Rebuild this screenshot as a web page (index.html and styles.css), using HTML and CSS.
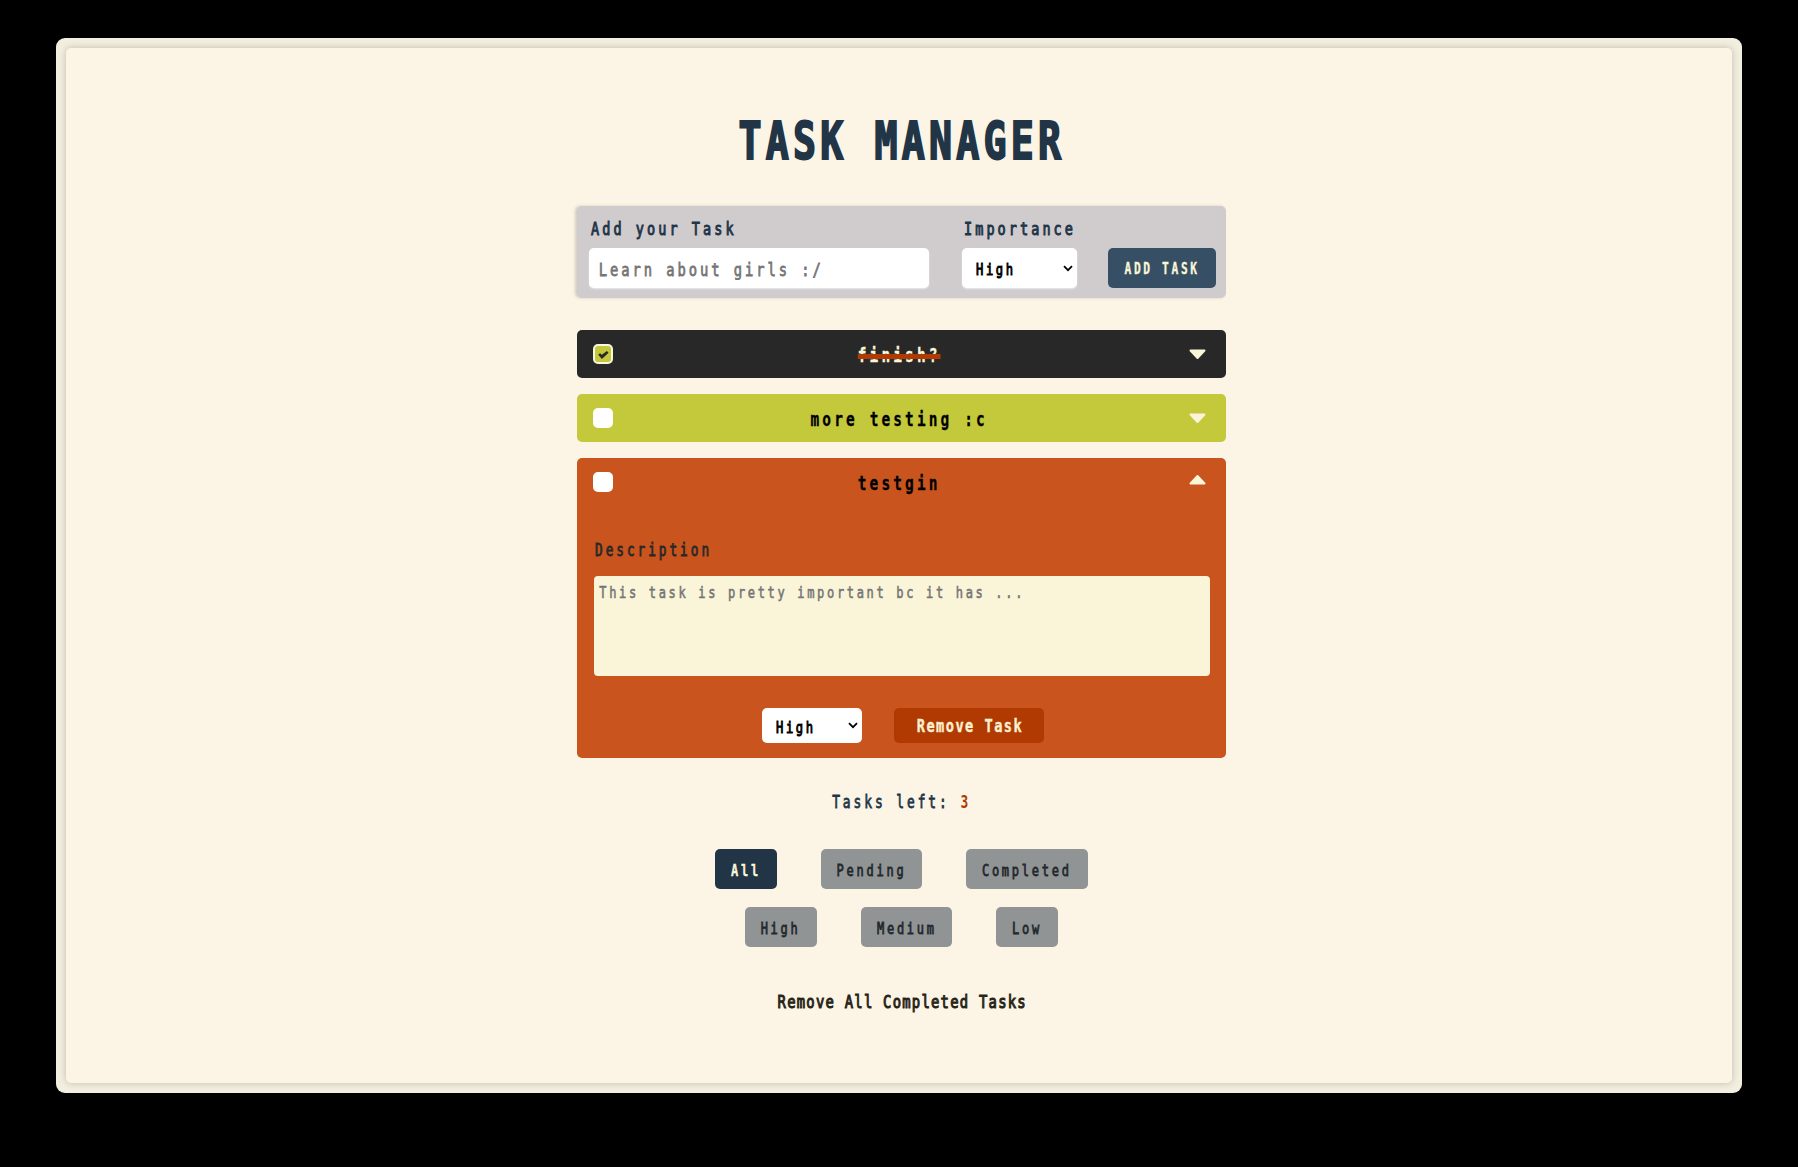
FILE: index.html
```html
<!DOCTYPE html>
<html lang="en">
<head>
<meta charset="utf-8">
<title>Task Manager</title>
<link rel="stylesheet" href="styles.css">
</head>
<body>
<div class="frame">
<main class="page">
  <h1 class="title"><span class="t t-title">TASK MANAGER</span></h1>

  <form class="add">
    <div class="field field-task">
      <label class="label" for="task"><span class="t t-label">Add your Task</span></label>
      <div class="control"><input id="task" class="input" type="text" placeholder="Learn about girls :/"></div>
    </div>
    <div class="field field-level">
      <label class="label"><span class="t t-label">Importance</span></label>
      <div class="control select"><span class="t t-select">High</span>
        <svg class="chevron" viewBox="0 0 10 7"><path d="M1 1.2l4 4 4-4"/></svg></div>
    </div>
    <button class="btn-add" type="button"><span class="t t-add">ADD TASK</span></button>
  </form>

  <ul class="tasks">
    <li class="task task-done">
      <div class="row">
        <span class="check checked"><svg viewBox="0 0 20 20"><path d="M5.2 10.8l1.8-1.5 1.9 1.5 5-3.8 1.7 1.7-6.7 6.4z"/></svg></span>
        <span class="name"><span class="t t-name">finish?</span></span>
        <svg class="arrow" viewBox="0 0 17 11"><path d="M1.5 1.5h14l-7 7.5z"/></svg>
      </div>
    </li>
    <li class="task task-low">
      <div class="row">
        <span class="check"></span>
        <span class="name"><span class="t t-name">more testing :c</span></span>
        <svg class="arrow" viewBox="0 0 17 11"><path d="M1.5 1.5h14l-7 7.5z"/></svg>
      </div>
    </li>
    <li class="task task-high">
      <div class="row">
        <span class="check"></span>
        <span class="name"><span class="t t-name">testgin</span></span>
        <svg class="arrow up" viewBox="0 0 17 11"><path d="M1.5 9.5h14l-7-7.5z"/></svg>
      </div>
      <div class="details">
        <label class="desc-label" for="desc"><span class="t t-desc">Description</span></label>
        <div class="desc"><textarea id="desc" class="area" placeholder="This task is pretty important bc it has ..."></textarea></div>
        <div class="actions">
          <div class="select select-small"><span class="t t-select">High</span>
            <svg class="chevron" viewBox="0 0 10 7"><path d="M1 1.2l4 4 4-4"/></svg></div>
          <button class="btn-remove" type="button"><span class="t t-remove">Remove Task</span></button>
        </div>
      </div>
    </li>
  </ul>

  <p class="left"><span class="t t-left">Tasks left: <b class="count">3</b></span></p>

  <div class="filters">
    <button class="filter active w3"><span class="t t-filter">All</span></button>
    <button class="filter w7"><span class="t t-filter">Pending</span></button>
    <button class="filter w9"><span class="t t-filter">Completed</span></button>
  </div>
  <div class="filters">
    <button class="filter w4"><span class="t t-filter">High</span></button>
    <button class="filter w6"><span class="t t-filter">Medium</span></button>
    <button class="filter w3"><span class="t t-filter">Low</span></button>
  </div>

  <button class="clear" type="button"><span class="t t-clear">Remove All Completed Tasks</span></button>
</main>
</div>
</body>
</html>
```
FILE: styles.css
```css
* { box-sizing: border-box; }

body {
  margin: 0;
  height: 1167px;
  padding: 38px 56px 74px;
  background: #000;
  font-family: "DejaVu Sans Mono", monospace;
  overflow: hidden;
}

.frame {
  height: 1055px;
  padding: 10px;
  border-radius: 9px;
  background: #f3efe0;
}

.page {
  height: 1035px;
  display: flex;
  flex-direction: column;
  align-items: center;
  padding: 62px 0 0 5px;
  border-radius: 5px;
  background: #fcf5e6;
  box-shadow: 0 0 7px rgba(60, 55, 30, .28);
}

button { border: 0; padding: 0; font-family: inherit; border-radius: 5px; }

/* condensed monospace lettering */
.t {
  display: inline-block;
  white-space: pre;
  transform: scaleX(.75);
  -webkit-text-stroke: .8px currentColor;
}

.title { margin: 0; padding-top: 1px; height: 60px; line-height: 61px; color: #213547; }
.t-title { font-size: 51px; font-weight: 700; letter-spacing: 5.6px; -webkit-text-stroke-width: 2px; }

.add {
  width: 649px;
  height: 92px;
  margin-top: 36px;
  padding: 0 10px 10px 12px;
  display: flex;
  align-items: flex-end;
  border-radius: 5px;
  background: #d0cbcd;
  box-shadow: -2px 0 3px rgba(120, 110, 110, .3);
}

.field-task { width: 340px; margin-right: 33px; }
.field-level { width: 115px; margin-right: 31px; }
.label { display: block; height: 40px; line-height: 42px; padding: 0 0 0 2px; color: #213547; }
.t-label, .t-desc, .t-select { transform-origin: left; }
.t-label { font-size: 18px; letter-spacing: 4.1px; -webkit-text-stroke-width: 1px; }

.control { height: 40px; border-radius: 5px; background: #fff; box-shadow: 0 1px 2px rgba(255, 255, 255, .6); overflow: hidden; }

.input {
  width: 133.33%;
  height: 40px;
  padding: 2px 0 0 13px;
  border: 0;
  outline: 0;
  background: transparent;
  font: 18.4px "DejaVu Sans Mono", monospace;
  letter-spacing: 3.92px;
  -webkit-text-stroke: .8px #757575;
  transform: scaleX(.75);
  transform-origin: left;
}
.input::placeholder, .area::placeholder { color: #757575; }

.select {
  display: flex;
  align-items: center;
  justify-content: space-between;
  padding: 3px 4px 0 14px;
  background: #fff;
  color: #000;
}
.t-select { font-size: 16.2px; letter-spacing: 3.45px; -webkit-text-stroke-width: 1px; }
.chevron { width: 10px; height: 7px; flex: none; fill: none; stroke: #000; stroke-width: 1.8; margin-top: -3px; }

.btn-add {
  width: 108px;
  height: 40px;
  display: flex;
  align-items: center;
  justify-content: center;
  padding-top: 2px;
  background: #364f65;
  color: #faf6d8;
}
.t-add { font-size: 15px; font-weight: 700; letter-spacing: 3.5px; -webkit-text-stroke-width: .3px; }

.tasks {
  width: 649px;
  margin: 32px 0 0;
  padding: 0;
  list-style: none;
  display: flex;
  flex-direction: column;
  gap: 16px;
}
.task { border-radius: 5px; color: #000; }
.task-done { background: #282828; color: #faf6d8; }
.task-low { background: #c4c83b; }
.task-high { height: 300px; background: #c9541e; }

.row { height: 48px; padding: 0 20px 0 16px; display: flex; align-items: center; }
.check { width: 20px; height: 20px; flex: none; border-radius: 5px; background: #fff; }
.checked { border: 2px solid #faf6e4; background: #c4c83b; }
.checked svg { display: block; width: 20px; height: 20px; margin: -2px; fill: #282828; }
.name { flex: 1; display: flex; justify-content: center; padding: 3px 4px 0 0; }
.t-name { font-size: 19.3px; font-weight: 700; line-height: 24px; letter-spacing: 4.15px; -webkit-text-stroke-width: .3px; }
.task-done .t-name {
  text-decoration: line-through #b03a02 5px;
}
.arrow { width: 17px; height: 11px; flex: none; fill: #faf6d8; stroke: #faf6d8; stroke-width: 2; stroke-linejoin: round; }
.task-low .arrow { fill: #fcf3dc; stroke: #fcf3dc; }
.arrow.up { margin-top: -5px; }

.details { padding: 28px 16px 0 17px; }
.desc-label { display: block; height: 42px; line-height: 33px; padding-left: 1px; color: #282828; }
.t-desc { font-size: 17px; letter-spacing: 3.95px; }
.desc { height: 100px; border-radius: 4px; background: #faf5d8; overflow: hidden; }
.area {
  display: block;
  width: 133.33%;
  height: 100px;
  padding: 6px 6px 6px 7px;
  border: 0;
  outline: 0;
  resize: none;
  background: transparent;
  font: 16px/22px "DejaVu Sans Mono", monospace;
  letter-spacing: 3.57px;
  -webkit-text-stroke: .6px #757575;
  transform: scaleX(.75);
  transform-origin: left;
}
.actions { display: flex; justify-content: center; gap: 32px; margin-top: 32px; padding-left: 2px; }
.select-small { width: 100px; height: 35px; border-radius: 5px; }
.btn-remove {
  width: 150px;
  height: 35px;
  display: flex;
  align-items: center;
  justify-content: center;
  padding-left: 1px;
  background: #b03a02;
  color: #fcf0cf;
}
.t-remove { font-size: 18.2px; font-weight: 700; letter-spacing: 1.95px; -webkit-text-stroke-width: .4px; }

.left { margin: 28px 0 0; height: 32px; line-height: 33px; color: #213547; }
.t-left { font-size: 17.2px; letter-spacing: 3.9px; }
.count { color: #b03a02; -webkit-text-stroke-width: 0; }

.filters { display: flex; justify-content: center; gap: 44px; margin-top: 31px; }
.filters + .filters { margin-top: 18px; }
.filter {
  height: 40px;
  display: flex;
  align-items: center;
  justify-content: center;
  padding-top: 3px;
  background: #909494;
  color: #23282c;
}
.filter.active { background: #213547; color: #faf6d8; }
.w3 { width: 62px; }
.w4 { width: 72px; }
.w6 { width: 91px; }
.w7 { width: 101px; }
.w9 { width: 122px; }
.t-filter { font-size: 16px; letter-spacing: 3.65px; }
.active .t-filter { font-weight: 700; -webkit-text-stroke-width: .3px; }

.clear { height: 30px; line-height: 30px; margin-top: 40px; padding-left: 2px; background: none; color: #282418; }
.t-clear { font-size: 18.5px; letter-spacing: 1.65px; -webkit-text-stroke-width: 1.1px; }
```
